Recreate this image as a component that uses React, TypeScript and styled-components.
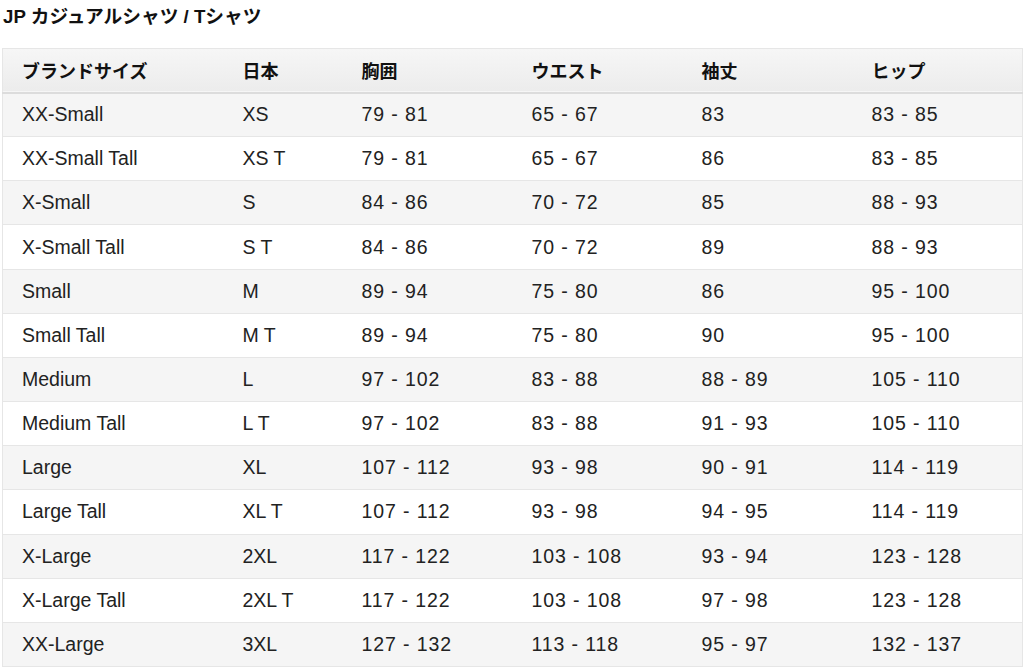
import React from "react";
import styled, { createGlobalStyle } from "styled-components";

const Global = createGlobalStyle`
  html, body { margin: 0; padding: 0; background: #fff; }
  body { font-family: "Liberation Sans", Arial, "Noto Sans CJK JP", sans-serif; color: #111; }
  *, *::before, *::after { box-sizing: border-box; }
`;

const Page = styled.div`
  padding: 6px 3px 0 2px;
`;

const Title = styled.h2`
  margin: 0 0 0 1px;
  font-size: 18.7px;
  font-weight: bold;
  line-height: 22px;
  color: #111;
`;

const Table = styled.table`
  margin-top: 20px;
  width: 1020px;
  border-collapse: collapse;
  border: 1px solid #e6e6e6;
  table-layout: fixed;
`;

const HeadRow = styled.tr`
  background: linear-gradient(#f6f6f6, #ececec);
  border-bottom: 2px solid #dcdcdc;
`;

const Th = styled.th<{ $w: number }>`
  width: ${(p) => p.$w}px;
  height: 44px;
  padding: 0 0 0 19px;
  text-align: left;
  font-size: 18px;
  font-weight: bold;
  font-family: "Noto Sans CJK JP", sans-serif;
  color: #111;
`;

const Row = styled.tr<{ $odd: boolean }>`
  background: ${(p) => (p.$odd ? "#f5f5f5" : "#ffffff")};
  border-bottom: 1px solid #e6e6e6;
`;

const Td = styled.td<{ $num: boolean }>`
  height: 44.17px;
  padding: 0 0 0 19px;
  font-size: 19.5px;
  letter-spacing: ${(p) => (p.$num ? "0.9px" : "0")};
  color: #222;
  white-space: nowrap;
`;

const headers: [string, number][] = [
  ["ブランドサイズ", 221],
  ["日本", 119],
  ["胸囲", 170],
  ["ウエスト", 170],
  ["袖丈", 170],
  ["ヒップ", 170],
];

const rows: string[][] = [
  ["XX-Small", "XS", "79 - 81", "65 - 67", "83", "83 - 85"],
  ["XX-Small Tall", "XS T", "79 - 81", "65 - 67", "86", "83 - 85"],
  ["X-Small", "S", "84 - 86", "70 - 72", "85", "88 - 93"],
  ["X-Small Tall", "S T", "84 - 86", "70 - 72", "89", "88 - 93"],
  ["Small", "M", "89 - 94", "75 - 80", "86", "95 - 100"],
  ["Small Tall", "M T", "89 - 94", "75 - 80", "90", "95 - 100"],
  ["Medium", "L", "97 - 102", "83 - 88", "88 - 89", "105 - 110"],
  ["Medium Tall", "L T", "97 - 102", "83 - 88", "91 - 93", "105 - 110"],
  ["Large", "XL", "107 - 112", "93 - 98", "90 - 91", "114 - 119"],
  ["Large Tall", "XL T", "107 - 112", "93 - 98", "94 - 95", "114 - 119"],
  ["X-Large", "2XL", "117 - 122", "103 - 108", "93 - 94", "123 - 128"],
  ["X-Large Tall", "2XL T", "117 - 122", "103 - 108", "97 - 98", "123 - 128"],
  ["XX-Large", "3XL", "127 - 132", "113 - 118", "95 - 97", "132 - 137"],
];

export default function App() {
  return (
    <Page>
      <Global />
      <Title>JP カジュアルシャツ / Tシャツ</Title>
      <Table>
        <thead>
          <HeadRow>
            {headers.map(([h, w]) => (
              <Th key={h} $w={w}>{h}</Th>
            ))}
          </HeadRow>
        </thead>
        <tbody>
          {rows.map((r, i) => (
            <Row key={i} $odd={i % 2 === 0}>
              {r.map((c, j) => (
                <Td key={j} $num={j >= 2}>{c}</Td>
              ))}
            </Row>
          ))}
        </tbody>
      </Table>
    </Page>
  );
}
